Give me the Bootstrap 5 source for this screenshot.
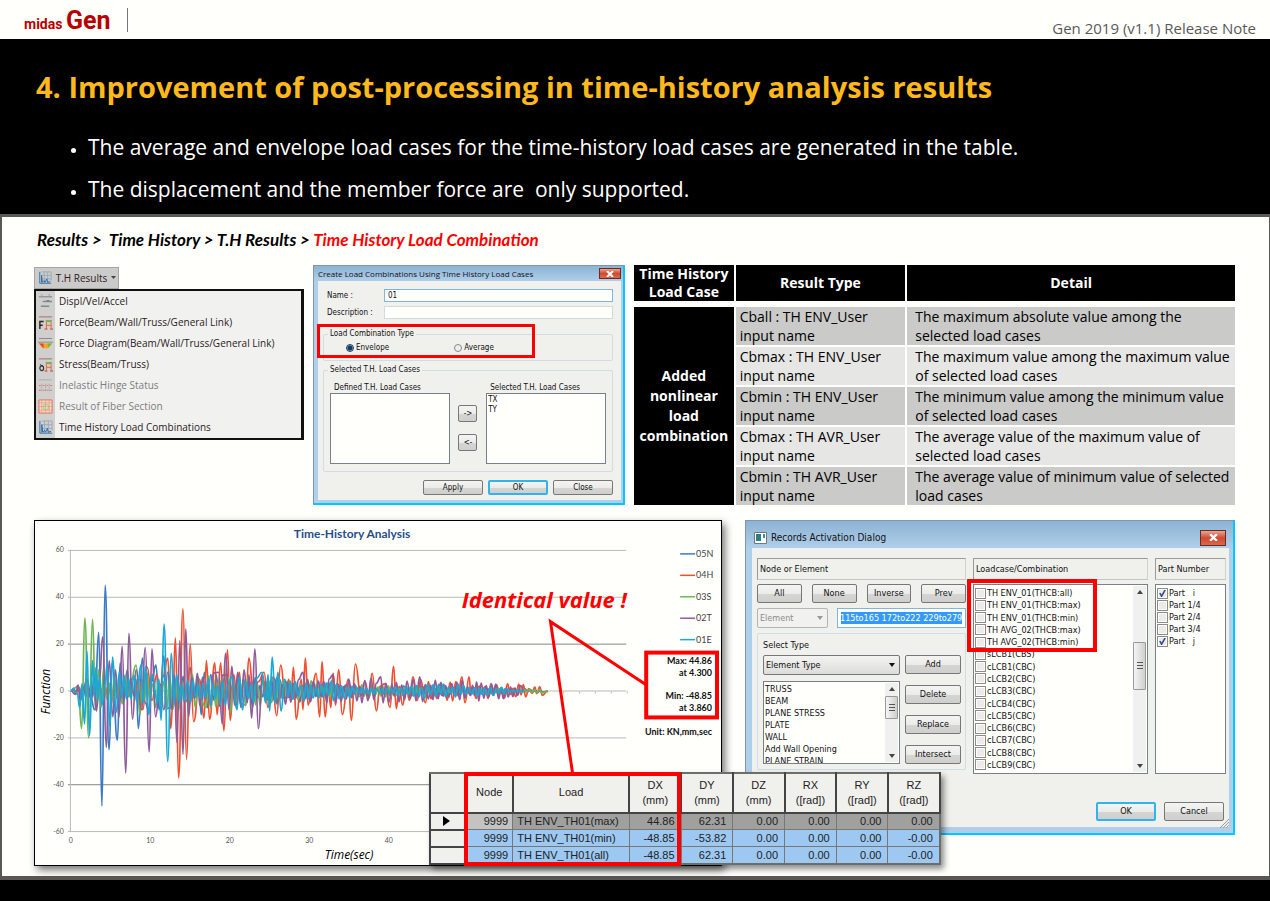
<!DOCTYPE html>
<html lang="en">
<head>
<meta charset="utf-8">
<meta name="viewport" content="width=device-width, initial-scale=1">
<title>Gen 2019 (v1.1) Release Note</title>
<link href="https://cdn.jsdelivr.net/npm/bootstrap@5.3.0/dist/css/bootstrap.min.css" rel="stylesheet">
<style>
  :root { --paper:#fffffc; --edge:#595855; --face:#f0f0ed; --alert:#ff0000; }
  body { font-family:"Open Sans","Noto Sans",sans-serif; background:#000; color:#000; }
  .topbar { background:var(--paper); height:39px; padding:0 14px 0 24px; }
  .brand { font-family:Roboto,sans-serif; font-weight:700; color:#b80000; font-size:14px; line-height:42px; text-decoration:none; }
  .brand span { font-size:25px; }
  .rule { width:1px; height:24px; background:#777; margin:8px 0 0 17px; }
  .edition { color:#595959; font-size:15px; line-height:20px; margin-top:18px; }
  .hero { padding:26px 36px 4px; }
  .hero h1 { color:#ffb91d; font-size:29px; font-weight:700; line-height:44px; margin-bottom:17px; }
  .hero ul { color:#fff; font-size:21px; line-height:42px; padding-left:52px; white-space:pre-wrap; }
  .hero li::marker { font-size:15px; }
  .sheet { background:var(--paper); border:solid var(--edge); border-width:3px 1px 4px 2px; padding:13px 34px 10px 32px; }
  .trail { font-family:Lato,sans-serif; font-size:17px; font-weight:700; font-style:italic; line-height:20px; margin:0 0 15px 3px; white-space:pre-wrap; }
  .trail a { color:inherit; text-decoration:none; }
  .trail a.here { color:var(--alert); }
  .upper { display:grid; grid-template-columns:270fr 312fr 601fr; gap:9px; margin-bottom:15px; align-items:start; }
  .lower { display:grid; grid-template-columns:688fr 490fr; gap:23px; align-items:start; position:relative; }

  /* ribbon menu */
  .ribbon { font-size:10px; padding-top:2px; }
  .ribbon button { background:#cbcbc9; border:1px solid #a5a5a3; color:#321a26; font-size:10px; line-height:20px; padding:0 2px 0 3px; width:85px; }
  .ribbon ul { background:#f1f1ef; border:2px solid #111; border-right-width:3px; margin:0; }
  .ribbon li { display:flex; align-items:center; height:21px; color:#2c1a24; }
  .ribbon li svg { background:#cfcfcd; height:21px; width:19px; padding:3px 2px; margin-right:4px; flex:none; }
  .ribbon li.idle { color:#7e7c80; }

  /* dialogs */
  .dlg { background:#afcfeb; border:solid #00c8ff; border-width:1px 2px 2px 1px; border-top-color:#7d97ab; border-left-color:#7d97ab; font-family:"DejaVu Sans Condensed","DejaVu Sans",sans-serif; color:#111; }
  .dlg .bar { background:linear-gradient(#8db2d3,#afcfeb); display:flex; align-items:center; justify-content:space-between; }
  .shut { border:1px solid #6e2a20; background:linear-gradient(#eaa594,#cf4a30 50%,#d9694e); color:#fff; padding:0; line-height:1; display:flex; align-items:center; justify-content:center; }
  .pane { background:var(--face); }
  .dlg button.key { border:1px solid #777; border-radius:2px; background:linear-gradient(#f4f4f2,#ebebe9 50%,#d5d5d3 51%,#cfcfcd); color:#111; padding:0; text-align:center; }
  .dlg button.main { border:2px solid #2fb4ee; }
  .dlg input[type=text] { border:1px solid #d3d9dd; background:var(--paper); color:#111; }
  .well { background:var(--paper); border:1px solid #7b7f8c; margin:0; padding:1px; list-style:none; overflow:hidden; }
  .frame { position:absolute; border:4px solid var(--alert); pointer-events:none; }

  .small-dlg { font-size:8px; line-height:10px; }
  .small-dlg .bar { height:15px; padding:0 2px 0 4px; font-family:"Open Sans",sans-serif; }
  .small-dlg .shut { width:22px; height:11px; }
  .small-dlg .pane { margin:0 2px 3px 4px; padding:8px 8px 5px 5px; position:relative; }
  .fieldrow { display:grid; grid-template-columns:57px 1fr; align-items:center; margin:0 0 4px 4px; }
  .fieldrow input { height:13px; padding:0 3px; width:100%; }
  .small-dlg input.active { border-color:#7eb6dc; }
  .small-dlg fieldset { border:1px solid #d2dde3; border-radius:2px; margin:4px 0 0; padding:0 6px; }
  .small-dlg legend { float:none; width:auto; font-size:8px; line-height:10px; padding:0 2px; margin:0 0 0 -2px; }
  .small-dlg .types { height:32px; margin-top:10px; }
  .types label { display:flex; align-items:center; gap:2px; }
  .types input { appearance:none; width:8px; height:8px; border:1px solid #888; border-radius:50%; background:#eee; margin:0; }
  .types input:checked { background:radial-gradient(circle,#0b3c66 0 2px,#8fc9e8 3px); border-color:#335; }
  .picker { display:grid; grid-template-columns:119fr 36fr 119fr; padding-bottom:7px; }
  .picker .well { height:71px; }
  .picker .mid { padding-top:26px; display:flex; flex-direction:column; gap:12px; align-items:center; }
  .picker .key { width:19px; height:17px; font-size:8px; line-height:12px; }
  .small-dlg .acts { display:flex; justify-content:flex-end; gap:5px; margin-top:8px; }
  .small-dlg .acts .key { width:60px; height:15px; font-size:8px; line-height:11px; }

  .big-dlg { font-size:9px; line-height:12px; }
  .big-dlg .bar { height:27px; padding:6px 7px 0 8px; font-size:10px; }
  .big-dlg .shut { width:26px; height:16px; }
  .big-dlg .pane { margin:0 4px 6px 6px; padding:10px 3px 6px 5px; }
  .cols { display:grid; grid-template-columns:209fr 175fr 71fr; gap:7px; }
  .cap { border:1px solid #9a9a98; border-right-color:#d0d0ce; border-bottom-color:#c5c5c3; height:22px; line-height:20px; padding-left:2px; margin-bottom:4px; }
  .big-dlg .key { height:19px; font-size:9px; line-height:15px; }
  .quad { display:grid; grid-template-columns:repeat(4,1fr); gap:10px; margin-top:1px; }
  .big-dlg select { appearance:none; width:100%; height:20px; border:1px solid #777; border-radius:2px; font-size:9px; padding:0 2px; color:#111;
    background:url("data:image/svg+xml,%3Csvg xmlns='http://www.w3.org/2000/svg' width='8' height='5'%3E%3Cpath d='M0 0h8L4 5z' fill='%23111'/%3E%3C/svg%3E") no-repeat right 4px center/6px 4px,linear-gradient(#f3f3f1,#dcdcda); }
  .big-dlg select:disabled { color:#8b8b89; border-color:#b5b5b3; opacity:1;
    background:url("data:image/svg+xml,%3Csvg xmlns='http://www.w3.org/2000/svg' width='8' height='5'%3E%3Cpath d='M0 0h8L4 5z' fill='%23999'/%3E%3C/svg%3E") no-repeat right 4px center/6px 4px,#f1f1ef; }
  .pickrow { display:grid; grid-template-columns:71fr 129fr; gap:9px; margin-top:5px; }
  .big-dlg .pickrow input { height:20px; width:100%; font-size:9px; padding:3px 2px; border-color:#7eb6dc; color:#fff; background:#3399ff content-box; box-shadow:inset 0 0 0 3px var(--paper); }
  .group { border:1px solid #cfdde6; border-radius:2px; margin-top:5px; height:137px; padding:5px 4px 0 5px; display:grid; grid-template-columns:137fr 56fr; column-gap:5px; align-content:start; }
  .group .stack { display:flex; flex-direction:column; gap:11px; }
  .typelist { position:relative; height:83px; margin-top:6px; line-height:12px; }
  .checks { height:190px; position:relative; padding:2px 1px; display:flex; flex-direction:column; justify-content:space-between; }
  .checks label { display:flex; align-items:center; gap:1px; height:12px; white-space:pre; }
  .checks input { appearance:none; width:11px; height:11px; margin:0; border:1px solid #8b8b89; background:#ecebe8; box-shadow:inset 0 0 0 1px #fff; flex:none; }
  .checks input:checked { background:#ecebe8 url("data:image/svg+xml,%3Csvg xmlns='http://www.w3.org/2000/svg' viewBox='0 0 10 10'%3E%3Cpath d='M2 4.5l2 3.5 4-7' fill='none' stroke='%23304a8c' stroke-width='1.7'/%3E%3C/svg%3E") center/9px; }
  .parts { justify-content:flex-start; }
  .scroll { position:absolute; right:1px; top:1px; bottom:1px; width:13px; background:#f0f0ee; display:flex; flex-direction:column; align-items:center; padding:4px 0; }
  .scroll i { width:0; height:0; border:3px solid transparent; border-top:0; border-bottom:4px solid #444; }
  .scroll i.dn { border-top:4px solid #444; border-bottom:0; margin-top:auto; }
  .scroll b { width:13px; border:1px solid #999; border-radius:1px; background:repeating-linear-gradient(#555 0 1px,transparent 1px 3px) center/6px 8px no-repeat,linear-gradient(90deg,#f5f5f3,#cfcfcd); }
  .big-dlg .acts { display:flex; justify-content:flex-end; gap:8px; margin:28px 2px 0 0; position:relative; }
  .big-dlg .acts .key { width:60px; }
  .grip { position:absolute; right:-5px; bottom:-7px; }

  /* load case table */
  .cases { border-collapse:separate; border-spacing:2px; margin:-2px; width:calc(100% + 4px); font-size:14px; line-height:19px; table-layout:fixed; }
  .cases th { background:#000; color:#fff; text-align:center; vertical-align:middle; padding:0; }
  .cases thead th { height:40px; line-height:18px; border-bottom:4px solid var(--paper); }
  .cases tbody th { line-height:20px; }
  .cases td { background:#cacac9; padding:0 0 0 4px; height:38px; vertical-align:top; }
  .cases td + td { padding-left:8px; }
  .cases tr:nth-child(even) td { background:#e6e6e5; }

  /* chart and result grid */
  .plot { border:1px solid #000; box-shadow:3px 4px 8px rgba(0,0,0,.55); background:var(--paper); margin:0; line-height:0; }
  .plot svg { width:100%; height:auto; }
  .gridwrap { position:absolute; left:32.9%; width:42.6%; bottom:1px; box-shadow:3px 4px 6px rgba(0,0,0,.45); }
  .res { width:100%; table-layout:fixed; border-collapse:collapse; font:11px/15px "Liberation Sans",Arial,sans-serif; background:var(--face); border:2px solid #6d6d6a; color:#222; }
  .res th { font-weight:400; text-align:center; border:2px solid #444; border-top-color:#6d6d6a; height:40px; padding:0; }
  .res td { border:1px solid #777; text-align:right; padding:0 6px 0 4px; height:17px; background:#9dc8f2; white-space:nowrap; }
  .res td:nth-child(2) { padding-right:4px; }
  .res td:nth-child(3) { text-align:left; }
  .res tr.cur td { background:#a0a09e; }
  .res tr.cur td:nth-child(2) { background:#c3c3c1; }
  .res tbody tr td:first-child { background:var(--face); border:2px solid #444; text-align:center; line-height:0; }
</style>
</head>
<body>
<header class="topbar d-flex">
  <a class="brand" href="#">midas <span>Gen</span></a>
  <div class="rule"></div>
  <div class="edition ms-auto">Gen 2019 (v1.1) Release Note</div>
</header>

<section class="hero">
  <h1>4. Improvement of post-processing in time-history analysis results</h1>
  <ul class="mb-0"><li>The average and envelope load cases for the time-history load cases are generated in the table.</li><li>The displacement and the member force are  only supported.</li></ul>
</section>

<main class="sheet">
  <nav class="trail"><a href="#">Results</a> &gt;  <a href="#">Time History</a> &gt; <a href="#">T.H Results</a> &gt; <a class="here" href="#">Time History Load Combination</a></nav>

  <div class="upper">
    <div class="ribbon">
      <button type="button" class="d-flex align-items-center justify-content-between">
        <svg width="14" height="14" viewBox="0 0 16 16" fill="none"><path d="M4 1h11v10M7 1v12M11 1v12M4 5h11M4 9h11" stroke="#9aa9b8"/><path d="M2 1v13h13M4 13V5l1 8 2-2 1 2 2-4 1 4 3-1" stroke="#2568ad"/></svg>
        T.H Results
        <svg width="5" height="4" viewBox="0 0 5 4"><path d="M0 0h5L2.500 3z" fill="#444"/></svg>
      </button>
      <ul class="list-unstyled">
        <li><svg viewBox="0 0 16 16" fill="none"><path d="M1 3h14" stroke="#777"/><path d="M3 1h2M11 1h2" stroke="#b88"/><path d="M5 8h10M3 13h9" stroke="#888" stroke-width="1.500"/><path d="M9 7h3" stroke="#57a"/></svg>Displ/Vel/Accel</li>
        <li><svg viewBox="0 0 16 16" fill="none"><path d="M1 2h14" stroke="#a66"/><path d="M2 15V7h4M2 11h3" stroke="#321" stroke-width="1.500"/><path d="M9 15V7h5v8M9 11h5" stroke="#e8643c"/><path d="M8 6h7" stroke="#5c5" stroke-width="1.500"/><path d="M7 15h3M13 15h3" stroke="#d33"/></svg>Force(Beam/Wall/Truss/General Link)</li>
        <li><svg viewBox="0 0 16 16"><path d="M1 2h14v1H1zM0 6h16v1H0z" fill="#777"/><path d="M1 8h14l-4 5H5z" fill="#f3a52a"/><path d="M1 8h5v5z" fill="#e8482c"/><path d="M10 8h5l-4 4z" fill="#6cba3c"/></svg>Force Diagram(Beam/Wall/Truss/General Link)</li>
        <li><svg viewBox="0 0 16 16" fill="none"><path d="M1 2h14" stroke="#a66"/><ellipse cx="4" cy="12" rx="2" ry="2.500" stroke="#333" stroke-width="1.200"/><path d="M2 8l4 2" stroke="#333"/><path d="M9 15V7h5v8M9 11h5" stroke="#e8643c"/><path d="M8 6h7" stroke="#5c5" stroke-width="1.500"/><path d="M7 15h3M13 15h3" stroke="#d33"/></svg>Stress(Beam/Truss)</li>
        <li class="idle"><svg viewBox="0 0 16 16" fill="none"><path d="M1 2h14" stroke="#aaa"/><path d="M1 8h14M1 13h14" stroke="#c77" stroke-dasharray="2 2"/><path d="M4 6v9M8 6v9M12 6v9" stroke="#b99" stroke-dasharray="2 1"/></svg>Inelastic Hinge Status</li>
        <li class="idle"><svg viewBox="0 0 16 16" fill="none"><path d="M1 1h14v14H1z" fill="#f5d9c0" stroke="#e07060"/><path d="M4 1v14M8 1v14M12 1v14M1 4h14M1 8h14M1 12h14" stroke="#e59580" stroke-width=".7"/><path d="M6 6h5v5H6z" stroke="#9c8"/></svg>Result of Fiber Section</li>
        <li><svg viewBox="0 0 16 16" fill="none"><path d="M4 1h11v10M7 1v12M11 1v12M4 5h11M4 9h11" stroke="#9aa9b8"/><path d="M2 1v13h13M4 13V5l1 8 2-2 1 2 2-4 1 4 3-1" stroke="#2568ad"/></svg>Time History Load Combinations</li>
      </ul>
    </div>

    <form class="dlg small-dlg">
      <div class="bar"><span>Create Load Combinations Using Time History Load Cases</span><button type="button" class="shut" aria-label="Close window"><svg width="8" height="6" viewBox="0 0 8 6"><path d="M1 0l6 6M7 0L1 6" stroke="#fff" stroke-width="2"/></svg></button></div>
      <div class="pane">
        <div class="fieldrow"><label for="nm">Name :</label><input class="active" id="nm" type="text" value="01"></div>
        <div class="fieldrow"><label for="ds">Description :</label><input id="ds" type="text"></div>
        <fieldset class="types"><legend>Load Combination Type</legend>
          <div class="row g-0 pt-1 ps-3"><label class="col-5"><input type="radio" name="ty" checked> Envelope</label><label class="col-5"><input type="radio" name="ty"> Average</label></div>
        </fieldset>
        <span class="frame" style="left:-1px;top:43px;width:72%;height:34px;border-width:3px"></span>
        <fieldset><legend>Selected T.H. Load Cases</legend>
          <div class="picker pt-1">
            <div class="pt-1"><span class="ps-1">Defined T.H. Load Cases</span><ul class="well"></ul></div>
            <div class="mid"><button type="button" class="key">-&gt;</button><button type="button" class="key">&lt;-</button></div>
            <div class="pt-1"><span class="ps-1">Selected T.H. Load Cases</span><ul class="well"><li>TX</li><li>TY</li></ul></div>
          </div>
        </fieldset>
        <div class="acts"><button type="button" class="key">Apply</button><button type="button" class="key main">OK</button><button type="button" class="key">Close</button></div>
      </div>
    </form>

    <table class="cases">
      <colgroup><col style="width:16.700%"><col style="width:28.400%"><col></colgroup>
      <thead><tr><th>Time History Load Case</th><th>Result Type</th><th>Detail</th></tr></thead>
      <tbody>
        <tr><th rowspan="5">Added nonlinear load combination</th><td>Cball : TH ENV_User<br>input name</td><td>The maximum absolute value among the<br>selected load cases</td></tr>
        <tr><td>Cbmax : TH ENV_User<br>input name</td><td>The maximum value among the maximum value<br>of selected load cases</td></tr>
        <tr><td>Cbmin : TH ENV_User<br>input name</td><td>The minimum value among the minimum value<br>of selected load cases</td></tr>
        <tr><td>Cbmax : TH AVR_User<br>input name</td><td>The average value of the maximum value of<br>selected load cases</td></tr>
        <tr><td>Cbmin : TH AVR_User<br>input name</td><td>The average value of minimum value of selected<br>load cases</td></tr>
      </tbody>
    </table>
  </div>

  <div class="lower">
    <figure class="plot">
      <svg id="chart" viewBox="0 0 688 345" font-family="Lato, sans-serif">
        <g id="axes" stroke="#b9b9b7"></g>
        <g id="ticks" font-size="7" fill="#555"></g>
        <g id="waves" fill="none" stroke-width="1.700" stroke-linejoin="round"></g>
        <text x="318" y="17" text-anchor="middle" font-size="12" font-weight="700" fill="#1f4e87">Time-History Analysis</text>
        <g id="keys" font-size="9" fill="#444"></g>
        <text x="315" y="339" text-anchor="middle" font-family="Open Sans" font-style="italic" font-size="12">Time(sec)</text>
        <text transform="translate(15 171) rotate(-90)" text-anchor="middle" font-family="Open Sans" font-style="italic" font-size="12">Function</text>
        <g font-size="9" font-weight="700" text-anchor="end" fill="#111">
          <text x="679" y="143">Max: 44.86</text><text x="679" y="155">at  4.300</text>
          <text x="679" y="179">Min: -48.85</text><text x="679" y="191">at 3.860</text>
          <text x="679" y="215">Unit: KN,mm,sec</text>
        </g>
        <g fill="none" stroke="#f00"><path d="M614 165L517 101L539 252" stroke-width="3"/><rect x="613" y="132" width="71" height="65" stroke-width="4"/></g>
        <text x="428" y="87" font-family="Open Sans" font-size="22" font-weight="700" font-style="italic" fill="#f00">Identical value !</text>
      </svg>
    </figure>

    <form class="dlg big-dlg">
      <div class="bar"><span class="d-flex align-items-center gap-1"><svg width="13" height="12" viewBox="0 0 13 12"><path d="M.5 .5h12v11H.5z" fill="#fff" stroke="#777"/><path d="M2 2h5v7H2z" fill="#2a7f86"/><path d="M9 2h2v4H9z" fill="#48a"/></svg>Records Activation Dialog</span><button type="button" class="shut" aria-label="Close window"><svg width="9" height="7" viewBox="0 0 8 6"><path d="M1 0l6 6M7 0L1 6" stroke="#fff" stroke-width="2"/></svg></button></div>
      <div class="pane">
        <div class="cols">
          <div>
            <div class="cap">Node or Element</div>
            <div class="quad"><button type="button" class="key">All</button><button type="button" class="key">None</button><button type="button" class="key">Inverse</button><button type="button" class="key">Prev</button></div>
            <div class="pickrow"><select disabled aria-label="Kind"><option>Element</option></select><input type="text" aria-label="Range" value="115to165 172to222 229to279"></div>
            <div class="group">
              <div><label for="st">Select Type</label><select id="st" class="mt-1"><option>Element Type</option></select>
                <ul class="well typelist"><li>TRUSS</li><li>BEAM</li><li>PLANE STRESS</li><li>PLATE</li><li>WALL</li><li>Add Wall Opening</li><li>PLANE STRAIN</li><li class="scroll"><i></i><b style="height:23px;margin-top:5px"></b><i class="dn"></i></li></ul></div>
              <div class="stack pt-3"><button type="button" class="key">Add</button><button type="button" class="key">Delete</button><button type="button" class="key">Replace</button><button type="button" class="key">Intersect</button></div>
            </div>
          </div>
          <div class="position-relative">
            <div class="cap">Loadcase/Combination</div>
            <div class="well checks" id="lc"><span class="scroll"><i></i><b style="height:48px;margin-top:48px"></b><i class="dn"></i></span></div>
            <span class="frame" style="left:-6px;top:21px;width:130px;height:73px"></span>
          </div>
          <div>
            <div class="cap">Part Number</div>
            <div class="well checks parts" id="pt"></div>
          </div>
        </div>
        <div class="acts"><button type="button" class="key main">OK</button><button type="button" class="key">Cancel</button>
          <svg class="grip" width="9" height="9" viewBox="0 0 9 9"><path d="M0 9L9 0M3 9L9 3M6 9L9 6" stroke="#999"/></svg></div>
      </div>
    </form>

    <div class="gridwrap">
      <table class="res">
        <colgroup><col style="width:7%"><col style="width:9.200%"><col style="width:22.900%"><col><col><col><col><col><col></colgroup>
        <thead><tr><th></th><th>Node</th><th>Load</th><th>DX<br>(mm)</th><th>DY<br>(mm)</th><th>DZ<br>(mm)</th><th>RX<br>([rad])</th><th>RY<br>([rad])</th><th>RZ<br>([rad])</th></tr></thead>
        <tbody>
          <tr class="cur"><td><svg width="7" height="10" viewBox="0 0 7 10"><path d="M0 0l7 5-7 5z"/></svg></td><td>9999</td><td>TH ENV_TH01(max)</td><td>44.86</td><td>62.31</td><td>0.00</td><td>0.00</td><td>0.00</td><td>0.00</td></tr>
          <tr><td></td><td>9999</td><td>TH ENV_TH01(min)</td><td>-48.85</td><td>-53.82</td><td>0.00</td><td>0.00</td><td>0.00</td><td>-0.00</td></tr>
          <tr><td></td><td>9999</td><td>TH ENV_TH01(all)</td><td>-48.85</td><td>62.31</td><td>0.00</td><td>0.00</td><td>0.00</td><td>-0.00</td></tr>
        </tbody>
      </table>
      <span class="frame" style="left:6.800%;width:42.500%;top:0;bottom:-1px"></span>
    </div>
  </div>
</main>

<script src="https://cdn.jsdelivr.net/npm/bootstrap@5.3.0/dist/js/bootstrap.bundle.min.js"></script>
<script>
  // check lists
  const fill = (id, rows) => document.getElementById(id).insertAdjacentHTML('afterbegin',
    rows.map(([t, on]) => `<label><input type="checkbox"${on ? ' checked' : ''}>${t}</label>`).join(''));
  fill('lc', ['TH ENV_01(THCB:all)', 'TH ENV_01(THCB:max)', 'TH ENV_01(THCB:min)', 'TH AVG_02(THCB:max)', 'TH AVG_02(THCB:min)', 'sLCB1(CBS)',
    ...Array.from({length: 9}, (_, i) => `cLCB${i + 1}(CBC)`)].map(t => [t]));
  fill('pt', [['Part   i', 1], ['Part 1/4'], ['Part 2/4'], ['Part 3/4'], ['Part   j', 1]]);

  // chart: seconds and millimetres to drawing units
  const X = t => 36 + t * 7.97, Y = v => 170.5 - v * 2.355, put = (id, s) => document.getElementById(id).innerHTML = s;
  let ax = '', tk = '';
  for (let v = -60; v <= 60; v += 20) {
    ax += `<path d="M33 ${Math.floor(Y(v)) + .5}H593" ${v === 20 || v === -40 ? 'stroke="#858583"' : ''}/>`;
    tk += `<text x="29" y="${Y(v) + 2}" text-anchor="end">${v}</text>`;
  }
  ax += '<path d="M35.5 29V312"/>';
  for (let t = 2; t <= 70; t += 2) ax += `<path d="M${X(t)} 171v2"/>`;
  for (let t = 0; t <= 40; t += 10) tk += `<text x="${X(t)}" y="323" text-anchor="middle">${t}</text>`;
  put('axes', ax); put('ticks', tk);

  let seed = 11;
  const rnd = () => (seed = (seed * 16807) % 2147483647) / 2147483647;
  // each series: recorded peaks [t, v], with the small oscillation between them following env [t, amplitude]
  function wave(peaks, env, end) {
    const amp = t => { for (let i = 1; i < env.length; i++) if (t <= env[i][0]) { const [a, b] = [env[i - 1], env[i]]; return a[1] + (b[1] - a[1]) * (t - a[0]) / (b[0] - a[0]); } return .4; };
    const all = [[0, 0]]; let sign = 1;
    for (const p of [...peaks, [end, 0]]) {
      let [t] = all[all.length - 1];
      sign = all[all.length - 1][1] > 0 ? -1 : 1;
      while (p[0] - t > .75) { t += .25 + rnd() * .16; all.push([t, sign * amp(t) * (.35 + rnd() * .75)]); sign = -sign; }
      all.push(p);
    }
    let d = `M${X(0)} ${Y(0)}`;
    for (let i = 1; i < all.length; i++) {
      const x0 = X(all[i - 1][0]), x1 = X(all[i][0]), m = ((x0 + x1) / 2).toFixed(1);
      d += `C${m} ${Y(all[i - 1][1]).toFixed(1)} ${m} ${Y(all[i][1]).toFixed(1)} ${x1.toFixed(1)} ${Y(all[i][1]).toFixed(1)}`;
    }
    return d;
  }
  const S = [
    ['05N', '#3b7bc4', [[3,-8],[3.5,25],[3.9,-49],[4.3,45],[4.8,-25],[5.2,12],[5.85,-21],[6.2,12],[6.6,-5],[7.1,9],[8.2,5],[8.5,-16],[9,14],[9.8,-8],[10.7,11],[11.1,-8],[11.7,15],[12.6,-7],[15,10],[16.1,5],[16.4,-10],[16.8,8],[17.6,7],[19.7,7]], [[0,.5],[2,3],[12,8],[20,7],[30,4],[40,2],[50,1.5],[60,.6]], 60],
    ['04H', '#f04e30', [[8.6,5],[9.05,-8],[9.6,10],[10.2,-4],[10.8,7],[11.3,-4],[12.2,14],[12.55,-16],[12.8,-7],[13.15,22.5],[13.55,-37],[14.1,35],[14.55,-29],[15,20],[15.45,-13],[16.2,5],[16.75,-11.5],[17.05,13],[17.45,-12],[18.1,12],[18.4,-10],[18.85,12],[19.25,-17],[19.7,17.5],[20.05,-12.5],[20.5,7],[20.9,-5],[21.2,8],[22,-6],[22.4,14],[23,-3],[23.6,4],[24.3,8],[24.8,-7],[25.3,6],[25.9,-10.5],[26.4,11],[27,-3],[27.4,5],[27.7,-3],[28,10],[28.35,-12],[29,5],[29.2,-8],[29.5,14],[29.85,-6],[30.4,3],[30.85,7.5],[31.3,-11],[31.6,12.5],[32,-11],[32.4,3],[32.7,-7],[33,7.5],[33.3,-6],[33.7,9],[34.15,-10],[34.9,5],[35.3,-12.5],[35.8,11.5],[36.5,-2],[37,4],[37.5,-3],[37.9,7.5],[38.45,-8.5],[38.9,2],[39.5,3],[40.15,-7],[40.6,10.5],[40.95,-7.5],[41.3,2],[41.75,-6],[42.2,2],[42.6,-4],[43.05,6],[43.6,-4],[44,5],[44.6,-5],[45,4],[49.2,6],[49.6,-5],[50.1,6]], [[0,.8],[1,1.5],[3,2],[7,3],[11,6],[46,5],[54,3],[60,2.2]], 60],
    ['03S', '#6fb557', [[.9,2],[1.35,-16],[1.75,31],[2.25,-20],[2.72,30.5],[3.1,-8],[3.5,9],[3.8,-7],[4.1,9],[8.2,11],[8.7,-10],[15.3,7],[17,-7],[19.8,6],[20.1,-9]], [[0,.8],[4,6],[12,8],[20,7],[30,4],[38,2.5],[50,1.5],[60,.8]], 60],
    ['02T', '#8f5b9b', [[.6,-1.5],[.9,2.5],[1.2,-4],[2,5],[2.6,-4],[2.9,6],[3.2,-8.5],[3.6,5],[4,23],[4.45,-24],[4.8,13],[5.3,-11],[5.6,9],[6.05,-11],[6.45,19],[6.9,-35],[7.3,24.5],[7.75,-12],[8.2,9],[8.9,-8],[9.35,18.5],[9.85,-26],[10.2,18],[10.65,-11],[11.2,3],[11.7,-8],[12.2,8],[12.7,-8],[13,7],[13.35,-22],[13.7,21.5],[14.1,-27],[14.45,26.5],[14.8,-11],[15.2,6],[18.6,8],[19.05,-14],[19.45,16],[19.9,-8],[20.25,10.5],[20.6,-6],[21,8],[21.4,-7],[21.8,9],[22.2,-5],[22.4,7],[22.75,-11.5],[23.15,18],[23.6,-16],[24.1,7],[29.2,8],[33,7],[39,6],[43.9,6]], [[0,.5],[1,3],[12,8],[24,7],[30,5],[50,4.5],[56,2.5],[60,.5]], 57],
    ['01E', '#18a9d6', [[.8,-1],[1.1,-7],[1.4,3],[1.72,-14],[2.02,17],[2.35,-19],[2.72,13],[2.95,-3],[3.15,10],[3.4,-4],[3.6,6],[3.9,-6],[4.3,3],[4.55,11],[4.9,-15],[5.25,14.5],[5.7,-9],[6.1,8],[8.8,11],[9.1,-5],[9.4,10.5],[9.8,-10],[10.2,7],[10.9,-5],[11.05,5],[11.35,-12.5],[11.72,28.5],[12.2,-30],[12.62,16],[13,-5],[13.3,7],[13.7,-5],[20.3,6],[20.9,-8],[21.2,6],[21.6,-8],[22,4],[24.05,8],[24.5,-5],[24.8,7],[25,-8.5],[25.33,14.5],[25.7,-5],[26.05,8],[26.45,-8.5],[26.9,5]], [[0,.8],[4,7],[10,6],[20,6],[28,4.5],[34,4],[36,1.5],[42,1.5],[44,3],[52,2.5],[55,1]], 57]];
  put('waves', S.map(s => `<path stroke="${s[1]}" d="${wave(s[2], s[3], s[4])}"/>`).join(''));
  put('keys', S.map((s, i) => `<path d="M647 ${33 + i * 21.5}h15" stroke="${s[1]}" stroke-width="1.500"/><text x="663" y="${36 + i * 21.5}">${s[0]}</text>`).join(''));
</script>
</body>
</html>
